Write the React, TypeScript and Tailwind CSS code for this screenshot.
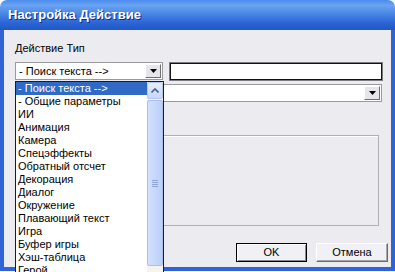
import React from 'react';

const items = [
  '- Поиск текста -->',
  '- Общие параметры',
  'ИИ',
  'Анимация',
  'Камера',
  'Спецэффекты',
  'Обратный отсчет',
  'Декорация',
  'Диалог',
  'Окружение',
  'Плавающий текст',
  'Игра',
  'Буфер игры',
  'Хэш-таблица',
  'Герой',
  'Звук',
];

function DropButton() {
  return (
    <div className="flex h-full w-[16px] items-center justify-center border border-b-[#6f6f6f] border-l-white border-r-[#6f6f6f] border-t-white bg-[#e6e5ea]">
      <svg width="7" height="4" viewBox="0 0 7 4">
        <path d="M0 0h7L3.5 4z" fill="#000" />
      </svg>
    </div>
  );
}

function Combo({ text, className }: { text: string; className?: string }) {
  return (
    <div className={`flex h-[18px] items-center border border-[#9a9a9e] bg-white p-[1px] ${className ?? ''}`}>
      <span className="flex-1 truncate pl-[2px] leading-[13px]">{text}</span>
      <DropButton />
    </div>
  );
}

export default function App() {
  return (
    <div className="relative h-[272px] w-[395px] overflow-hidden bg-white font-['Liberation_Sans',Arial,sans-serif] text-[11px] text-black">
      <div className="flex h-[271px] flex-col">
        {/* title bar */}
        <div className="flex h-[30px] shrink-0 items-center rounded-t-[7px] bg-[linear-gradient(180deg,#4b8cee_0%,#6aa3f1_18%,#4a88e6_45%,#2d66d6_75%,#2156c6_100%)] pl-[8px]">
          <span className="text-[13px] font-bold text-white [text-shadow:1px_1px_0_#0c2b8a]">
            Настройка Действие
          </span>
        </div>

        {/* body */}
        <div className="flex flex-1 flex-col border-x-4 border-b-4 border-[#2f63d6] bg-[#ecebef] pl-[11px] pr-[9px]">
          <div className="mt-[12px] leading-[13px]">Действие Тип</div>

          <div className="mt-[7px] flex items-center">
            <Combo text="- Поиск текста -->" className="w-[148px]" />
            <div className="ml-[7px] h-[17px] flex-1 border border-[#111] bg-white shadow-[0_0_0_1px_#7c7c7c]" />
          </div>

          <Combo text="" className="mt-[4px]" />

          <div className="mr-[3px] mt-[33px] h-[91px] border border-[#b0afb5] shadow-[inset_1px_1px_0_#fff]" />

          <div className="-mr-[6px] mb-[5px] mt-auto flex justify-end gap-[9px]">
            <button className="flex h-[19px] w-[71px] items-center justify-center border border-black bg-[#f1f0f4] shadow-[inset_1px_1px_0_#fff,inset_-1px_-1px_0_#8a8a8a]">
              OK
            </button>
            <button className="flex h-[19px] w-[72px] items-center justify-center border border-b-[#6a6a6a] border-l-white border-r-[#6a6a6a] border-t-white bg-[#f1f0f4] shadow-[inset_-1px_-1px_0_#a8a8a8]">
              Отмена
            </button>
          </div>
        </div>
      </div>

      {/* open dropdown list */}
      <div className="absolute left-[15px] top-[81px] flex h-[200px] w-[149px] border border-[#1b1b1b] bg-white">
        <div className="flex-1">
          {items.map((it, i) => (
            <div
              key={it}
              className={`h-[13px] whitespace-nowrap pl-[2px] leading-[13px] ${i === 0 ? 'bg-[#316ac5] text-white' : ''}`}
            >
              {it}
            </div>
          ))}
        </div>
        <div className="flex w-[16px] flex-col bg-[#f4f3ee]">
          <div className="flex h-[17px] items-center justify-center rounded-[2px] border border-[#b4c6ee] bg-[linear-gradient(180deg,#e6eefe,#c6d6fb)]">
            <svg width="8" height="5" viewBox="0 0 8 5">
              <path d="M0.5 4.5L4 1L7.5 4.5" fill="none" stroke="#4d6185" strokeWidth="1.6" />
            </svg>
          </div>
          <div className="mt-[1px] flex h-[166px] items-center justify-center rounded-[2px] border border-[#abbfeb] bg-[linear-gradient(90deg,#d3e0fd,#bccff8)]">
            <div className="flex flex-col gap-[1px]">
              <div className="h-[1px] w-[6px] bg-[#8ea4d6]" />
              <div className="h-[1px] w-[6px] bg-[#8ea4d6]" />
              <div className="h-[1px] w-[6px] bg-[#8ea4d6]" />
              <div className="h-[1px] w-[6px] bg-[#8ea4d6]" />
            </div>
          </div>
        </div>
      </div>
    </div>
  );
}
